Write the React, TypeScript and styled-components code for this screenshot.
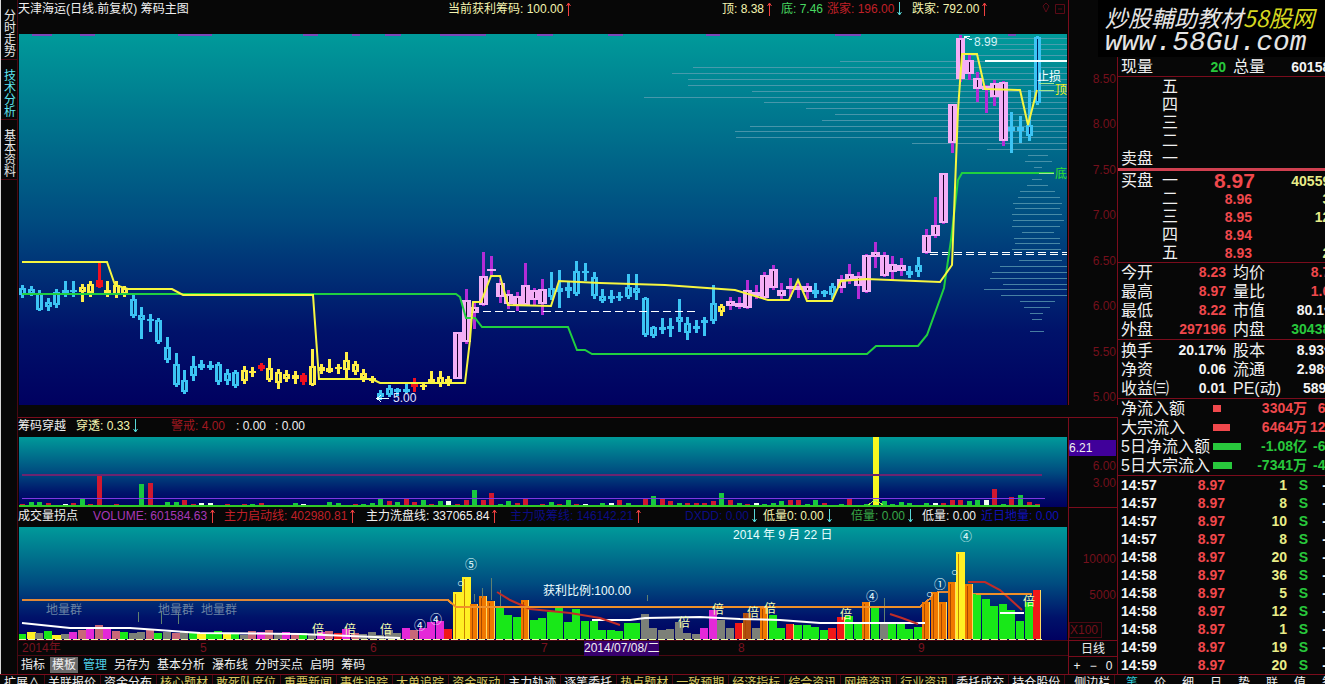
import React from "react";
import styled, { createGlobalStyle } from "styled-components";

const RED_LINE = "#7a0c1c";
const SMALL = `"Liberation Sans", "Noto Sans CJK SC", sans-serif`;

const Global = createGlobalStyle`
  * { box-sizing: border-box; }
  html, body { margin: 0; height: 100%; background: #070707; }
  body { overflow: hidden; font-family: ${SMALL}; font-size: 12px; line-height: 16px; color: #f0f0f0; }
  button { font: inherit; color: inherit; background: none; border: 0; padding: 0; cursor: pointer; }
`;

const Page = styled.div`
  position: relative;
  display: flex;
  flex-direction: column;
  height: 100vh;
  overflow: hidden;
`;
const Body = styled.div`
  flex: 1;
  min-height: 0;
  display: flex;
`;
const SideTabs = styled.nav`
  flex: none;
  width: 18px;
  border-left: 1px solid #d8d8d8;
  border-right: 1px solid #4a0812;
`;
const SideTab = styled.button<{ $active?: boolean }>`
  display: block;
  width: 16px;
  height: 60px;
  padding: 8px 1px 0 3px;
  line-height: 12px;
  word-break: break-all;
  color: ${(p) => (p.$active ? "#5fe6f0" : "#e8e8e8")};
  border-bottom: 1px solid #4a0812;
`;
const Panels = styled.main`
  flex: 1;
  min-width: 0;
  display: grid;
  grid-template-columns: minmax(0, 1fr) 50px;
  grid-template-rows: 34px minmax(0, 1fr) 32px 70px 20px 113px 16px 18px;
`;
const Legend = styled.header<{ $cols: string; $top?: number }>`
  display: grid;
  grid-template-columns: ${(p) => p.$cols};
  align-items: start;
  padding-top: ${(p) => p.$top ?? 1}px;
  white-space: nowrap;
`;
const Item = styled.span<{ $color?: string }>`
  display: flex;
  align-items: center;
  gap: 3px;
  color: ${(p) => p.$color ?? "#f0f0f0"};
`;
const SubLegend = styled(Legend)`
  border-top: 1px solid ${RED_LINE};
  margin-top: 12px;
`;
const Canvas = styled.svg`
  display: block;
  width: calc(100% - 2px);
  height: 100%;
  margin-left: 1px;
  font-family: ${SMALL};
  font-size: 12px;
`;
const AxisCell = styled.div<{ $line?: boolean; $gap?: number }>`
  margin-top: ${(p) => p.$gap ?? 0}px;
  border-left: 1px solid ${RED_LINE};
  border-right: 1px solid ${RED_LINE};
  border-top: ${(p) => (p.$line ? `1px solid ${RED_LINE}` : "0")};
  min-height: 0;
`;
const Scale = styled(AxisCell)<{ $pad: string }>`
  display: flex;
  flex-direction: column;
  justify-content: space-between;
  align-items: flex-end;
  padding: ${(p) => p.$pad};
  color: #74101c;
`;
const Cursor = styled.output`
  align-self: stretch;
  background: #40009a;
  color: #f0f0f0;
  line-height: 16px;
`;
const Unit = styled.span`
  align-self: flex-start;
  border: 1px solid #4a0812;
  line-height: 14px;
  padding-right: 3px;
`;
const DateRow = styled.div`
  display: grid;
  grid-template-columns: 178fr 170fr 171fr 43fr 154fr 180fr 150fr;
  padding-left: 4px;
  border-top: 1px solid #4a0812;
  border-bottom: 1px solid #4a0812;
  line-height: 15px;
  color: #7a1220;
  white-space: nowrap;
`;
const DateMark = styled.time`
  justify-self: start;
  background: #38006e;
  color: #f0f0f0;
`;
const Toolbar = styled.div`
  display: flex;
  align-items: center;
  gap: 3px;
  padding-left: 1px;
  white-space: nowrap;
`;
const Tool = styled.button<{ $on?: boolean; $color?: string }>`
  padding: 0 2px;
  background: ${(p) => (p.$on ? "#6a6a6a" : "none")};
  color: ${(p) => p.$color ?? "#f0f0f0"};
`;
const AxisTools = styled(AxisCell)`
  display: flex;
  justify-content: space-around;
  align-items: center;
`;
const BottomBar = styled.nav`
  flex: none;
  display: flex;
  height: 10px;
  overflow: hidden;
  border-top: 1px solid ${RED_LINE};
  white-space: nowrap;
`;
const BottomTabs = styled.div`
  flex: 1;
  min-width: 0;
  display: flex;
  overflow: hidden;
`;
const BottomTab = styled.button<{ $color?: string }>`
  flex: none;
  height: 16px;
  padding: 0 4px;
  line-height: 16px;
  border-right: 1px solid #4a0812;
  margin-right: -1px;
  color: ${(p) => p.$color ?? "#f0f0f0"};
  &:last-child { margin-left: 6px; }
`;
const BottomQuote = styled.div`
  flex: none;
  width: 207px;
  display: flex;
  gap: 12px;
  padding-left: 6px;
  overflow: hidden;
`;
const QuotePanel = styled.aside`
  flex: none;
  width: 207px;
  overflow: hidden;
  padding: 57px 0 0 3px;
  font-size: 16px;
`;
const Table = styled.table<{ $row: number; $line?: number; $top?: number }>`
  display: block;
  width: 217px;
  padding-top: ${(p) => p.$top ?? 0}px;
  border-spacing: 0;
  border-bottom: ${(p) => p.$line ?? 1}px solid ${(p) => (p.$line === 3 ? "#d04050" : RED_LINE)};
  margin-left: -3px;
  padding-left: 3px;
  box-sizing: content-box;
  tr { height: ${(p) => p.$row}px; }
  th, td { padding: 0; line-height: ${(p) => p.$row}px; height: ${(p) => p.$row}px; white-space: nowrap; }
  th { text-align: left; font-weight: 400; }
`;
const Cell = styled.td<{ $w: number; $c?: string; $big?: boolean; $left?: boolean }>`
  width: ${(p) => p.$w}px;
  min-width: ${(p) => p.$w}px;
  max-width: ${(p) => p.$w}px;
  font-size: ${(p) => (p.$big ? 21 : 14)}px;
  font-weight: 700;
  text-align: ${(p) => (p.$left ? "left" : "right")};
  color: ${(p) => p.$c ?? "#f4f4f4"};
`;
const Head = styled.th<{ $w: number }>`
  width: ${(p) => p.$w}px;
  min-width: ${(p) => p.$w}px;
  max-width: ${(p) => p.$w}px;
`;
const BidPrice = styled.span`
  margin-right: 4px;
`;
const FlowBar = styled.span<{ $w: number; $c: string }>`
  display: block;
  width: ${(p) => p.$w}px;
  height: 7px;
  background: ${(p) => p.$c};
`;
const Watermark = styled.a`
  position: absolute;
  top: 0;
  right: 0;
  width: 227px;
  height: 57px;
  padding: 4px 0 0 7px;
  background: #000;
  color: #e4e4e4;
  font-family: "Noto Sans CJK TC", "Noto Sans CJK SC", sans-serif;
  font-size: 23px;
  line-height: 27px;
  font-style: italic;
  text-decoration: none;
  white-space: nowrap;
`;
const Brand = styled.span`
  color: #d6d820;
`;
const Site = styled.span`
  display: block;
  line-height: 24px;
  font-family: "Liberation Mono", monospace;
  font-size: 28px;
`;

const Up = () => (
  <svg width="5" height="14" viewBox="0 0 5 14" stroke="#f04040" fill="none"><path d="M2.5 14V1M.5 4l2-3 2 3" /></svg>
);
const Down = () => (
  <svg width="5" height="14" viewBox="0 0 5 14" stroke="#58d8d8" fill="none"><path d="M2.5 0v13M.5 10l2 3 2-3" /></svg>
);

const X0 = 22;
const STEP = 8.53;
const xAt = (i: number) => Math.round(X0 + i * STEP);

const TONE: Record<string, string> = { c: "#3cc4f4", y: "#ffee48", r: "#f01020", p: "#f4aef6" };

/* Daily bars: tone, high, low, body top, body bottom */
const CANDLES: [string, number, number, number, number][] = [
  ["c", 285, 298, 288, 295], ["c", 286, 296, 289, 294], ["c", 290, 311, 293, 310], ["c", 298, 311, 302, 307], ["c", 289, 308, 292, 305],
  ["c", 281, 297, 290, 293], ["c", 281, 297, 290, 292], ["y", 284, 302, 287, 292], ["y", 281, 297, 284, 293], ["r", 262, 288, 280, 287],
  ["y", 281, 297, 290, 294], ["y", 281, 298, 285, 295], ["y", 286, 297, 288, 294], ["c", 294, 318, 299, 316], ["c", 307, 339, 315, 320],
  ["c", 314, 332, 319, 321], ["c", 318, 344, 320, 342], ["c", 337, 363, 347, 360], ["c", 353, 387, 364, 385], ["c", 370, 394, 380, 392],
  ["c", 356, 381, 366, 376], ["c", 360, 370, 364, 368], ["c", 361, 370, 365, 368], ["c", 362, 385, 364, 382], ["c", 369, 385, 373, 381],
  ["c", 370, 388, 372, 386], ["y", 366, 384, 370, 381], ["y", 367, 377, 371, 373], ["r", 363, 371, 365, 369], ["y", 358, 382, 368, 380],
  ["y", 369, 389, 372, 383], ["y", 370, 382, 374, 379], ["y", 371, 384, 375, 379], ["r", 373, 385, 375, 382], ["y", 349, 386, 366, 385],
  ["y", 364, 374, 367, 371], ["y", 359, 373, 368, 372], ["y", 364, 374, 367, 369], ["y", 352, 378, 360, 370], ["y", 361, 375, 364, 372],
  ["y", 369, 382, 373, 378], ["y", 376, 383, 378, 381], ["c", 390, 400, 393, 397], ["c", 385, 397, 388, 395], ["c", 388, 396, 389, 392],
  ["c", 384, 393, 389, 392], ["r", 378, 392, 382, 387], ["y", 384, 390, 385, 387], ["y", 371, 384, 379, 382], ["y", 371, 387, 377, 384],
  ["y", 376, 386, 379, 382], ["p", 332, 379, 332, 379], ["p", 289, 344, 300, 342], ["p", 302, 329, 307, 313], ["p", 252, 306, 276, 305],
  ["p", 256, 275, 269, 271], ["p", 279, 303, 283, 297], ["p", 290, 309, 294, 304], ["p", 292, 311, 296, 306], ["p", 263, 306, 285, 305],
  ["p", 288, 306, 290, 300], ["p", 279, 315, 289, 304], ["c", 272, 300, 288, 297], ["c", 270, 308, 288, 292], ["c", 282, 298, 287, 291],
  ["c", 261, 296, 271, 294], ["c", 263, 281, 271, 273], ["c", 272, 299, 277, 296], ["c", 289, 303, 296, 301], ["c", 290, 303, 296, 299],
  ["c", 292, 301, 296, 298], ["c", 274, 299, 287, 297], ["c", 274, 300, 288, 293], ["c", 297, 337, 298, 335], ["c", 326, 338, 327, 336],
  ["c", 318, 334, 327, 330], ["c", 318, 337, 326, 329], ["c", 299, 332, 317, 322], ["c", 317, 340, 323, 333], ["c", 320, 333, 326, 329],
  ["c", 317, 336, 320, 323], ["c", 285, 324, 303, 321], ["y", 304, 316, 306, 312], ["p", 297, 310, 301, 306], ["p", 297, 309, 303, 307],
  ["p", 280, 309, 290, 308], ["p", 285, 299, 292, 296], ["p", 272, 299, 275, 298], ["p", 265, 290, 269, 288], ["p", 283, 299, 290, 296],
  ["p", 278, 297, 286, 289], ["p", 282, 298, 286, 290], ["p", 283, 299, 286, 292], ["c", 283, 298, 290, 294], ["c", 290, 297, 291, 294],
  ["c", 283, 299, 286, 295], ["p", 275, 293, 279, 288], ["p", 264, 284, 274, 280], ["p", 272, 299, 276, 286], ["p", 254, 293, 255, 292],
  ["p", 242, 268, 252, 257], ["p", 252, 277, 255, 276], ["p", 256, 280, 264, 272], ["p", 258, 276, 265, 271], ["c", 266, 278, 271, 275],
  ["c", 257, 277, 265, 272], ["p", 229, 254, 235, 253], ["p", 197, 238, 225, 236], ["p", 173, 224, 173, 223], ["p", 104, 153, 104, 143],
  ["p", 35, 82, 38, 79], ["p", 54, 80, 60, 74], ["p", 72, 102, 78, 89], ["p", 85, 113, 86, 90], ["p", 80, 106, 83, 97],
  ["p", 81, 146, 82, 141], ["c", 112, 153, 127, 131], ["c", 116, 143, 127, 131], ["c", 90, 141, 125, 136], ["c", 36, 105, 37, 103],
];

const Candle = ({ i, d }: { i: number; d: [string, number, number, number, number] }) => {
  const [t, hi, lo, top, bot] = d;
  const x = xAt(i);
  const fill = TONE[t];
  const wick = t === "p" ? "#b42cd6" : fill;
  const pink = t === "p";
  const tall = bot - top > 3;
  return (
    <g>
      <rect x={x - 1} y={hi} width={3} height={lo - hi} fill={wick} />
      <rect x={x - (pink ? 4 : 3)} y={top} width={pink ? 9 : 7} height={bot - top} fill={fill} />
      {t !== "r" && tall && <rect x={x} y={top + 2} width={1} height={bot - top - 4} fill={pink ? "#180028" : "#00205c"} />}
    </g>
  );
};

/* Price distribution: y, left, right */
const CHIPS: [number, number, number][] = [
  [38, 962, 1067], [44, 985, 1067], [49, 990, 1067], [55, 968, 1067], [61, 840, 1067], [67, 693, 1067], [73, 672, 1067], [79, 688, 1067],
  [85, 688, 1067], [91, 752, 1067], [97, 644, 1067], [102, 764, 1067], [108, 806, 1067], [114, 835, 1067], [120, 822, 1067], [126, 750, 1067],
  [131, 735, 1067], [137, 736, 1067], [143, 912, 1067], [149, 987, 1067], [155, 1028, 1048], [161, 1025, 1052], [167, 1034, 1042], [173, 1025, 1054],
  [179, 1032, 1042], [185, 1027, 1048], [191, 1020, 1055], [197, 1018, 1060], [203, 1013, 1062], [208, 1015, 1060], [214, 1012, 1062], [220, 1013, 1064],
  [226, 1012, 1060], [232, 1022, 1054], [238, 1014, 1060], [243, 1015, 1060], [249, 1012, 1061], [260, 1019, 1062], [266, 1000, 1067], [272, 992, 1067],
  [278, 990, 1067], [284, 1003, 1067], [289, 984, 1067], [295, 1001, 1067], [301, 1020, 1055], [307, 1024, 1050], [313, 1030, 1043], [319, 1032, 1042], [331, 1030, 1044],
];
const TOP_MARKS: [number, number][] = [[32, 20], [80, 15], [178, 34], [303, 15], [352, 8], [385, 16], [440, 46], [537, 16], [608, 15], [706, 14], [835, 26], [1008, 8]];

const Sky = ({ id }: { id: string }) => (
  <defs>
    <linearGradient id={id} x1="0" y1="0" x2="0" y2="1">
      <stop offset="0" stopColor="#009a9a" />
      <stop offset="0.5" stopColor="#004c80" />
      <stop offset="0.8" stopColor="#00126a" />
      <stop offset="1" stopColor="#000060" />
    </linearGradient>
  </defs>
);

const PriceChart = () => (
  <Canvas viewBox="19 34 1048 371" preserveAspectRatio="xMinYMin slice" shapeRendering="crispEdges">
    <Sky id="sky1" />
    <rect x="19" y="34" width="1048" height="371" fill="url(#sky1)" />
    {TOP_MARKS.map(([x, w]) => <rect key={x} x={x} y="34" width={w} height="2" fill="#7a48b8" />)}
    {CHIPS.map(([y, a, b]) => <path key={y} d={`M${a} ${y}.5H${b}`} stroke="#5fa0b4" strokeOpacity="0.75" />)}
    {CANDLES.map((d, i) => <Candle key={i} i={i} d={d} />)}
    <path d="M483 311.5H696M930 252.500H1067M930 254.500H1067" stroke="#fff" strokeDasharray="8 4" />
    <path d="M985 61H1067" stroke="#f4ffff" strokeWidth="2" />
    <g fill="none" strokeWidth="2" shapeRendering="auto">
      <path stroke="#20d040" d="M22 294H456L460 297 466 318H475L482 327H568L577 350H585L592 354H867L876 346H918L927 335 944 288 951 240 958 180 962 173H1054" />
      <path stroke="#f6f640" d="M22 262H107L115 285 128 289H172L183 295H313L319 379H372L380 383H465L470 340 473 302H481L491 276H500L508 305 551 306 559 281 600 283 665 285 735 290 768 300H789L798 280 807 301H832L841 281 866 279 940 282 952 265 958 110 962 54H977L985 89 1020 90 1028 125 1037 90" />
    </g>
    <path d="M1039 83.500H1054M1039 90.500H1054M1039 173H1054" stroke="#a0e890" />
    <path d="M389 398.500H377M381 395L377 398.500 381 402M972 40L964 37 970 36" stroke="#e8ffff" fill="none" />
    <text x="393" y="402" fill="#e4e8ff">5.00</text>
    <text x="974" y="46" fill="#d0f4f8">8.99</text>
    <text x="1037" y="81" fill="#f4ffff">止损</text>
    <text x="1055" y="94" fill="#f0f020">顶</text>
    <text x="1055" y="178" fill="#30e030">底</text>
  </Canvas>
);

/* Crossing indicator: g/r/w tone with bar height; index follows the daily bars */
const CROSS = (
  "r3 g5 g5 r4 r2 w3 r4 g9 r3 r33 r2 r3 g2 g1 g23 r24 g2 g5 g5 r7 r3 w4 w4 g2 r3 r2 r3 g3 r4 g2 g1 r1 g4 w3 g2 w2 g5 g4 r2 r3 g3 g4 g9 r6 g5 r8 r5 g7 r3 g6 " +
  "w6 r3 r7 g17 r7 r14 g3 g6 r4 r8 g2 r3 g5 r3 g7 r3 w3 r2 g4 w4 r7 g4 g2 r8 g11 r8 r6 g4 r4 r4 r4 r6 g14 r7 g4 r3 w4 g3 g4 g6 r7 r7 g3 g7 r4 g2 g3 r9 g2 g3 " +
  "y70 g6 g3 g5 g4 r2 g4 w4 r4 r7 r7 g6 g7 w7 r18 g3 r10 g12 r5 r3"
).split(" ").map((s) => [s[0], Number(s.slice(1))] as [string, number]);
const CROSS_TONE: Record<string, string> = { g: "#18c840", r: "#d01830", w: "#f0fff0", y: "#f8f820" };

const CrossChart = () => (
  <Canvas viewBox="19 437 1048 70" preserveAspectRatio="xMinYMin slice" shapeRendering="crispEdges">
    <Sky id="sky2" />
    <rect x="19" y="437" width="1048" height="70" fill="url(#sky2)" />
    {CROSS.map(([t, h], i) => <rect key={i} x={xAt(i) - 2} y={507 - h} width={h > 60 ? 6 : 5} height={h} fill={CROSS_TONE[t]} />)}
    <path d="M22 475H1042" stroke="#6c2470" strokeWidth="2" />
    <path d="M22 498.500H1045" stroke="#8038e0" />
    <path d="M19 506H1040" stroke="#30c828" strokeWidth="2" />
    <path d="M868 505L875 500 883 505" stroke="#a8f848" fill="none" />
  </Canvas>
);

/* Volume: tone with the y of the bar's top */
const VOLUME = (
  "g634 y632 k633 g631 y635 k634 m632 p630 m627 p625 m629 p631 g632 k633 k632 p630 g633 k632 p633 k631 g632 y633 g634 g631 y633 g634 k635 p631 m632 p630 k633 m632 p634 g633 k634 m632 p631 r633 m629 p633 " +
  "k634 k632 k635 k630 k633 m628 p630 m628 m622 m621 r629 y592 y577 o604 o596 o601 g607 g615 g617 o600 g620 g618 g612 g608 g622 g609 g621 g621 g630 g630 g631 g623 g623 k614 k628 k630 k629 k622 k633 k634 m628 " +
  "m610 k620 k628 r623 b613 k628 o607 g615 g628 r624 g625 g625 g627 g630 r628 r617 g616 g623 o602 g607 k622 g624 g624 g629 g627 o602 o592 o602 o582 y552 o584 g594 g599 g606 g604 g610 g621 g602 r590"
).split(" ").map((s) => [s[0], Number(s.slice(1))] as [string, number]);
const VOL_TONE: Record<string, string> = {
  g: "#18e818", y: "#fff024", k: "#7c8078", m: "#e428d8", p: "#c86878", r: "#f01818", o: "#f07800", b: "#b05010",
};
const BADGES: [number, number, string][] = [[465, 569, "⑤"], [457, 587, "○"], [866, 601, "④"], [960, 541, "④"], [934, 589, "①"], [926, 598, "○"], [951, 576, "○"], [414, 630, "④"], [430, 624, "④"]];
const DOUBLES: [number, number][] = [[312, 634], [344, 634], [380, 634], [678, 627], [712, 614], [747, 617], [764, 613], [840, 619], [1023, 606]];

const VolumeChart = () => (
  <Canvas viewBox="19 527 1048 113" preserveAspectRatio="xMinYMin slice" shapeRendering="crispEdges">
    <Sky id="sky3" />
    <rect x="19" y="527" width="1048" height="113" fill="url(#sky3)" />
    <path d="M22 600H448L456 607H920L938 592H965V594H1032" fill="none" stroke="#e08838" strokeWidth="2" />
    {VOLUME.map(([t, y], i) => {
      const x = xAt(i);
      return (
        <g key={i}>
          <rect x={x - 4} y={y} width={t === "y" ? 9 : 8} height={639 - y} fill={VOL_TONE[t]} />
          {(t === "y" || t === "o" || t === "b") && y < 625 && <path d={`M${x - 2}.5 ${y + 2}V639`} stroke={t === "y" ? "#c88400" : "#a84800"} />}
          {(t === "r" || t === "o") && y < 625 && <path d={`M${x + 3}.5 ${y}V639`} stroke="#ffd860" />}
        </g>
      );
    })}
    <path d="M138 612V622M161 612V624M178 612V624M491 578V600M474 594V602M482 588V598M500 590V606M884 598V622M647 595V601" stroke="#608070" />
    <g fill="none" shapeRendering="auto" strokeWidth="2">
      <path stroke="#fff" d="M22 623L70 628 130 628 200 633 300 634 400 638M592 620H630L645 618 700 617 740 619 780 620 820 623H925M1000 613H1024" />
      <path stroke="#c02c28" d="M497 592L510 600 530 609 570 613 600 618 620 625M890 614L902 618 918 624M968 582H985L1000 590 1022 610" />
      <path stroke="#f09028" d="M448 600L456 607H920M976 594H1032" />
    </g>
    <path d="M19 639.500H1042" stroke="#f0ffb0" strokeDasharray="7 2" />
    {[[46, 614], [158, 614], [201, 614]].map(([x, y]) => <text key={x} x={x} y={y} fill="#6c84a4">地量群</text>)}
    {BADGES.map(([x, y, s]) => <text key={x} x={x} y={y} fill="#e8ffff">{s}</text>)}
    {DOUBLES.map(([x, y]) => <text key={x} x={x} y={y} fill="#f4ffb0">倍</text>)}
    <text x="543" y="595" fill="#f0ffff">获利比例:100.00</text>
    <text x="733" y="539" fill="#e8ffff">2014 年 9 月 22 日</text>
  </Canvas>
);

const R = "#f0484c", G = "#28c83c", Y = "#e8ec88", W = "#f4f4f4";
const BIDS = [["一", "8.97", "405591"], ["二", "8.96", "31"], ["三", "8.95", "126"], ["四", "8.94", ""], ["五", "8.93", "27"]];
const STATS: string[][][] = [
  [["今开", "8.23", R, "均价", "8.75", R], ["最高", "8.97", R, "量比", "1.62", R], ["最低", "8.22", R, "市值", "80.1亿", W], ["外盘", "297196", R, "内盘", "304388", G]],
  [["换手", "20.17%", W, "股本", "8.93亿", W], ["净资", "0.06", W, "流通", "2.98亿", W], ["收益㈢", "0.01", W, "PE(动)", "589.1", W]],
];
const FLOWS: [string, number, string, string, string][] = [
  ["净流入额", 8, R, "3304万", "6%"], ["大宗流入", 17, R, "6464万", "12%"], ["5日净流入额", 28, G, "-1.08亿", "-6%"], ["5日大宗流入", 19, G, "-7341万", "-4%"],
];
const TICKS: [string, string][] = [["14:57", "1"], ["14:57", "8"], ["14:57", "10"], ["14:57", "8"], ["14:58", "20"], ["14:58", "36"], ["14:58", "5"], ["14:58", "12"], ["14:58", "1"], ["14:59", "19"], ["14:59", "20"]];

const Quotes = () => (
  <QuotePanel>
    <Table $row={18} $top={1}><tbody><tr><Head $w={57}>现量</Head><Cell $w={48} $c={G}>20</Cell><Head $w={7} /><Head $w={48}>总量</Head><Cell $w={57}>601584</Cell></tr></tbody></Table>
    <Table $row={18} $line={3} $top={1}>
      <tbody>
        {["五", "四", "三", "二", "一"].map((n) => <tr key={n}><Head $w={41}>{n === "一" ? "卖盘" : ""}</Head><Head $w={176}>{n}</Head></tr>)}
      </tbody>
    </Table>
    <Table $row={18} $top={1}>
      <tbody>
        {BIDS.map(([n, p, v], i) => (
          <tr key={n}>
            <Head $w={41}>{i === 0 ? "买盘" : ""}</Head><Head $w={52}>{n}</Head>
            <Cell $w={42} $c={R} $big={i === 0} $left={i === 0}>{i === 0 ? p : <BidPrice>{p}</BidPrice>}</Cell>
            <Cell $w={82} $c={Y}>{v}</Cell>
          </tr>
        ))}
      </tbody>
    </Table>
    {STATS.map((rows, k) => (
      <Table key={k} $row={19} $top={k}>
        <tbody>
          {rows.map(([a, b, c, d, e, f]) => (
            <tr key={a}><Head $w={57}>{a}</Head><Cell $w={48} $c={c}>{b}</Cell><Head $w={7} /><Head $w={48}>{d}</Head><Cell $w={57} $c={f}>{e}</Cell></tr>
          ))}
        </tbody>
      </Table>
    ))}
    <Table $row={19}>
      <tbody>
        {FLOWS.map(([a, w, c, v, p]) => (
          <tr key={a}><Head $w={92}>{a}</Head><Cell $w={30} $left><FlowBar $w={w} $c={c} /></Cell><Cell $w={64} $c={c}>{v}</Cell><Cell $w={31} $c={c}>{p}</Cell></tr>
        ))}
      </tbody>
    </Table>
    <Table $row={18} $line={0}>
      <tbody>
        {TICKS.map(([t, q], i) => (
          <tr key={i}><Cell $w={76} $left>{t}</Cell><Cell $w={28} $c={R}>8.97</Cell><Cell $w={62} $c={Y}>{q}</Cell><Cell $w={21} $c={G}>S</Cell><Cell $w={19}>-</Cell></tr>
        ))}
      </tbody>
    </Table>
  </QuotePanel>
);

const YL = "#d8c860";
const TABS: [string, string?][] = [
  ["扩展∧"], ["关联报价"], ["资金分布"], ["核心题材", YL], ["敢死队席位", YL], ["重要新闻", YL], ["事件追踪", YL], ["大单追踪", YL], ["资金驱动", YL],
  ["主力轨迹"], ["逐笔委托"], ["热点题材", YL], ["一致预期", YL], ["经济指标", YL], ["综合资讯", YL], ["网摘资讯", YL], ["行业资讯", YL], ["委托成交"], ["持仓股份"], ["侧边栏"],
];
const TOOLS = ["指标", "模板", "管理", "另存为", "基本分析", "瀑布线", "分时买点", "启明", "筹码"];

export default function App() {
  return (
    <>
      <Global />
      <Page>
        <Body>
          <SideTabs>
            <SideTab>分时走势</SideTab>
            <SideTab $active>技术分析</SideTab>
            <SideTab>基本资料</SideTab>
          </SideTabs>
          <Panels>
            <Legend $cols="430fr 274fr 59fr 46fr 85fr 129fr 27fr">
              <Item>天津海运(日线.前复权) 筹码主图</Item>
              <Item $color="#f4f4b0">当前获利筹码: 100.00<Up /></Item>
              <Item $color="#f4f4b0">顶: 8.38<Up /></Item>
              <Item $color="#48d860">底: 7.46</Item>
              <Item $color="#c02028">涨家: 196.00<Down /></Item>
              <Item $color="#f4f4b0">跌家: 792.00<Up /></Item>
              <svg width="26" height="14" viewBox="0 0 26 14" fill="none" stroke="#5a0a16"><path d="M2 5l3-3 3 3-3 6zM14.500 3.500h9v9h-9zM17 8h4" /></svg>
            </Legend>
            <AxisCell />
            <PriceChart />
            <Scale $pad="37px 1px 0 0">
              {["8.50", "8.00", "7.50", "7.00", "6.50", "6.00", "5.50", "5.00"].map((v) => <span key={v}>{v}</span>)}
            </Scale>
            <SubLegend $cols="58fr 95fr 65fr 39fr 793fr" $top={0}>
              <Item>筹码穿越</Item>
              <Item $color="#f4f4b0">穿透: 0.33<Down /></Item>
              <Item $color="#a01820">警戒: 4.00</Item>
              <Item>: 0.00</Item>
              <Item>: 0.00</Item>
            </SubLegend>
            <AxisCell $line $gap={12} />
            <CrossChart />
            <Scale $pad="3px 1px 16px 0">
              <Cursor>6.21</Cursor>
              <span>6.00</span>
              <span>3.00</span>
            </Scale>
            <Legend $cols="75fr 131fr 142fr 144fr 175fr 78fr 88fr 71fr 59fr 87fr">
              <Item>成交量拐点</Item>
              <Item $color="#a838b8">VOLUME: 601584.63<Up /></Item>
              <Item $color="#c02028">主力启动线: 402980.81<Up /></Item>
              <Item>主力洗盘线: 337065.84<Up /></Item>
              <Item $color="#0c0c84">主力吸筹线: 146142.21<Up /></Item>
              <Item $color="#0c0c84">DXDD: 0.00<Down /></Item>
              <Item $color="#f4f4b0">低量0: 0.00<Down /></Item>
              <Item $color="#38a848">倍量: 0.00<Down /></Item>
              <Item>低量: 0.00</Item>
              <Item $color="#1010b8">近日地量: 0.00</Item>
            </Legend>
            <AxisCell $line />
            <VolumeChart />
            <Scale $pad="24px 1px 2px 0">
              <span>10000</span>
              <span>5000</span>
              <Unit>X100</Unit>
            </Scale>
            <DateRow>
              <span>2014年</span><span>5</span><span>6</span><span>7</span>
              <DateMark>2014/07/08/二</DateMark>
              <span>8</span><span>9</span>
            </DateRow>
            <AxisTools $line>日线</AxisTools>
            <Toolbar>
              {TOOLS.map((t) => <Tool key={t} $on={t === "模板"} $color={t === "管理" ? "#50d0e8" : undefined}>{t}</Tool>)}
            </Toolbar>
            <AxisTools $line>
              <button>+</button><button>−</button><button>0</button>
            </AxisTools>
          </Panels>
          <Quotes />
        </Body>
        <BottomBar>
          <BottomTabs>
            {TABS.map(([t, c]) => <BottomTab key={t} $color={c}>{t}</BottomTab>)}
          </BottomTabs>
          <BottomQuote>
            {["笔", "价", "细", "日", "势", "联", "值", "筹"].map((t, i) => <Tool key={t} $color={i === 0 ? "#30c8d8" : undefined}>{t}</Tool>)}
          </BottomQuote>
        </BottomBar>
        <Watermark href="#">
          炒股輔助教材<Brand>58股网</Brand>
          <Site>www.58Gu.com</Site>
        </Watermark>
      </Page>
    </>
  );
}
